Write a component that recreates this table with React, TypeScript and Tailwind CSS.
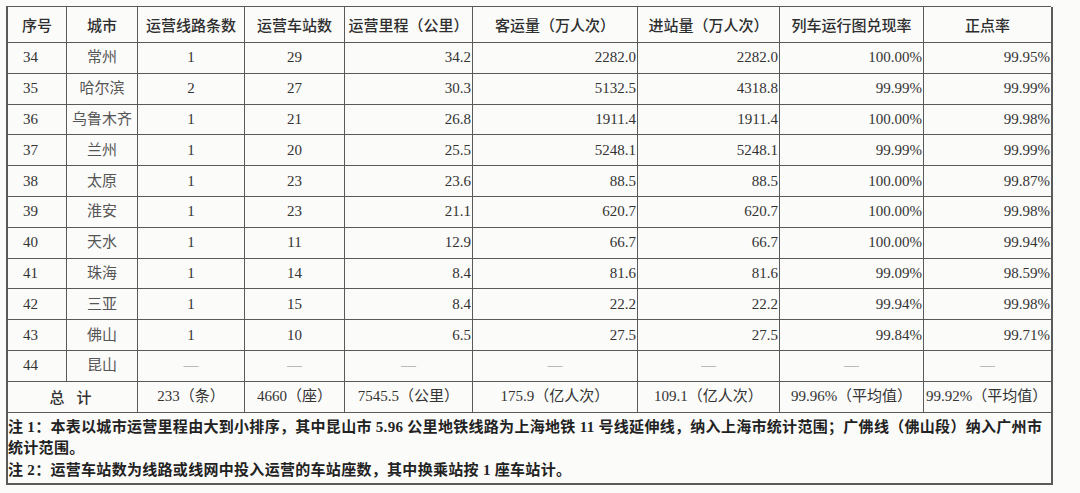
const serif = "font-['Liberation_Serif','Noto_Sans_CJK_SC',serif]";
const sans = "font-['Noto_Sans_CJK_SC','Liberation_Sans',sans-serif]";

type Row = [string, string, string, string, string, string, string, string, string];

const rows: Row[] = [
  ["34", "常州", "1", "29", "34.2", "2282.0", "2282.0", "100.00%", "99.95%"],
  ["35", "哈尔滨", "2", "27", "30.3", "5132.5", "4318.8", "99.99%", "99.99%"],
  ["36", "乌鲁木齐", "1", "21", "26.8", "1911.4", "1911.4", "100.00%", "99.98%"],
  ["37", "兰州", "1", "20", "25.5", "5248.1", "5248.1", "99.99%", "99.99%"],
  ["38", "太原", "1", "23", "23.6", "88.5", "88.5", "100.00%", "99.87%"],
  ["39", "淮安", "1", "23", "21.1", "620.7", "620.7", "100.00%", "99.98%"],
  ["40", "天水", "1", "11", "12.9", "66.7", "66.7", "100.00%", "99.94%"],
  ["41", "珠海", "1", "14", "8.4", "81.6", "81.6", "99.09%", "98.59%"],
  ["42", "三亚", "1", "15", "8.4", "22.2", "22.2", "99.94%", "99.98%"],
  ["43", "佛山", "1", "10", "6.5", "27.5", "27.5", "99.84%", "99.71%"],
];

const headers = [
  "序号",
  "城市",
  "运营线路条数",
  "运营车站数",
  "运营里程（公里）",
  "客运量（万人次）",
  "进站量（万人次）",
  "列车运行图兑现率",
  "正点率",
];

const totals = ["233（条）", "4660（座）", "7545.5（公里）", "175.9（亿人次）", "109.1（亿人次）", "99.96%（平均值）"];

// each cell draws its own right and bottom rule; the grid draws left and top
const cell = "border-r border-b border-[#5a5a5a] h-[30.8px] flex items-center text-[15px] leading-none whitespace-nowrap";

export default function App() {
  return (
    <div className="w-[1080px] h-[493px] bg-[#fbfbfa] pt-[6px] pl-[6px] text-[#333]">
      <div className="grid grid-cols-[59px_71px_107px_100px_128px_165px_142px_144px_129px] w-[1045px] border-l-2 border-t border-[#5a5a5a]">
        {headers.map((h, i) => (
          <div
            key={h}
            className={`border-r border-b border-[#5a5a5a] h-[36px] flex items-center justify-center text-[15px] leading-none whitespace-nowrap ${sans} font-medium text-[#2e2e2e] ${i === 8 ? "border-r-2" : ""}`}
          >
            {h}
          </div>
        ))}

        {rows.map((r) => (
          <Row key={r[0]} r={r} />
        ))}

        <div className={`${cell} ${serif} pl-[15px]`}>44</div>
        <div className={`${cell} ${serif} justify-center text-[#555]`}>昆山</div>
        {Array.from({ length: 7 }).map((_, i) => (
          <div key={i} className={`${cell} ${serif} justify-center text-[#888] ${i === 6 ? "border-r-2" : ""}`}>
            —
          </div>
        ))}

        <div className={`${cell} ${sans} col-span-2 justify-center font-medium tracking-[12px] pl-[8px]`}>总计</div>
        {totals.map((t) => (
          <div key={t} className={`${cell} ${serif} justify-center`}>
            {t}
          </div>
        ))}
        <div className={`${cell} ${serif} pl-[2px] border-r-2`}>99.92%（平均值）</div>

        <div className={`col-span-9 border-r-2 border-b-2 border-[#5a5a5a] ${serif} text-[15px] font-bold text-[#222] pt-[4px] pb-[2px] leading-[21.5px] tracking-[0.3px]`}>
          <div className="whitespace-nowrap">
            注 1：本表以城市运营里程由大到小排序，其中昆山市 5.96 公里地铁线路为上海地铁 11 号线延伸线，纳入上海市统计范围；广佛线（佛山段）纳入广州市
          </div>
          <div>统计范围。</div>
          <div>注 2：运营车站数为线路或线网中投入运营的车站座数，其中换乘站按 1 座车站计。</div>
        </div>
      </div>
    </div>
  );
}

function Row({ r }: { r: Row }) {
  return (
    <>
      <div className={`${cell} ${serif} pl-[15px]`}>{r[0]}</div>
      <div className={`${cell} ${serif} justify-center text-[#555]`}>{r[1]}</div>
      <div className={`${cell} ${serif} justify-center`}>{r[2]}</div>
      <div className={`${cell} ${serif} justify-center`}>{r[3]}</div>
      {r.slice(4).map((v, i) => (
        <div key={i} className={`${cell} ${serif} justify-end pr-[1px] ${i === 4 ? "border-r-2" : ""}`}>
          {v}
        </div>
      ))}
    </>
  );
}
